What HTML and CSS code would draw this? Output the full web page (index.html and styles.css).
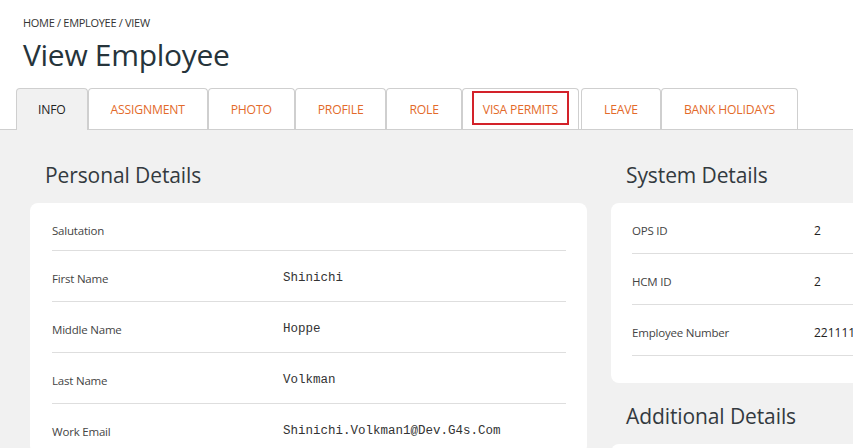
FILE: index.html
```html
<!DOCTYPE html>
<html lang="en">
<head>
<meta charset="utf-8">
<title>View Employee</title>
<link rel="stylesheet" href="styles.css">
</head>
<body>
<header class="page-header">
  <div class="breadcrumb">HOME / EMPLOYEE / VIEW</div>
  <h1 class="title">View Employee</h1>
</header>
<nav class="tabs">
  <a class="tab active">INFO</a>
  <a class="tab">ASSIGNMENT</a>
  <a class="tab">PHOTO</a>
  <a class="tab">PROFILE</a>
  <a class="tab">ROLE</a>
  <a class="tab highlighted">VISA PERMITS<span class="highlight-box"></span></a>
  <a class="tab">LEAVE</a>
  <a class="tab">BANK HOLIDAYS</a>
</nav>
<main class="content">
  <section class="col col-left">
    <h2 class="section-title">Personal Details</h2>
    <div class="card">
      <div class="row personal"><div class="label">Salutation</div><div class="value mono"></div></div>
      <div class="row personal"><div class="label">First Name</div><div class="value mono">Shinichi</div></div>
      <div class="row personal"><div class="label">Middle Name</div><div class="value mono">Hoppe</div></div>
      <div class="row personal"><div class="label">Last Name</div><div class="value mono">Volkman</div></div>
      <div class="row personal"><div class="label">Work Email</div><div class="value mono">Shinichi.Volkman1@Dev.G4s.Com</div></div>
    </div>
  </section>
  <section class="col col-right">
    <h2 class="section-title">System Details</h2>
    <div class="card system-card">
      <div class="row system"><div class="label">OPS ID</div><div class="value">2</div></div>
      <div class="row system"><div class="label">HCM ID</div><div class="value">2</div></div>
      <div class="row system"><div class="label">Employee Number</div><div class="value">22111111</div></div>
    </div>
    <h2 class="section-title additional">Additional Details</h2>
    <div class="card additional-card"></div>
  </section>
</main>
</body>
</html>
```
FILE: styles.css
```css
html, body {
  margin: 0;
  padding: 0;
  overflow: hidden;
  background: #ffffff;
  font-family: "Open Sans", "Noto Sans", sans-serif;
}

.page-header {
  padding: 16px 23px 0;
}

.breadcrumb {
  font-size: 11px;
  line-height: 14px;
  color: #333;
  letter-spacing: -0.3px;
}

.title {
  margin: 5px 0 0;
  font-size: 30px;
  line-height: 40px;
  font-weight: 400;
  color: #26343b;
  letter-spacing: -0.3px;
}

.tabs {
  display: flex;
  margin-top: 13px;
  padding-left: 16px;
  border-bottom: 1px solid #cfcfcf;
  height: 41px;
}

.tab {
  position: relative;
  display: flex;
  align-items: center;
  padding: 0 22px;
  height: 40px;
  border: 1px solid #cfcfcf;
  border-bottom: none;
  border-radius: 4px 4px 0 0;
  background: #fff;
  color: #e36a2a;
  font-size: 12.2px;
  letter-spacing: -0.2px;
}

.tab.active {
  background: #f1f1f1;
  color: #222;
  height: 41px;
  margin-bottom: -1px;
  padding: 0 21px;
}

.tab.highlighted {
  padding: 0 20px;
  margin-right: 2px;
}

.highlight-box {
  position: absolute;
  left: 9px;
  right: 9px;
  top: 2px;
  bottom: 4px;
  border: 2px solid #d3222a;
}

.content {
  display: flex;
  gap: 24px;
  background: #f1f1f1;
  padding: 30px 0 0 30px;
  min-height: 400px;
}

.col-left {
  width: 557px;
  flex: none;
}

.col-right {
  width: 400px;
  flex: none;
}

.section-title {
  margin: 0 0 13px 15px;
  font-size: 21px;
  line-height: 30px;
  font-weight: 400;
  color: #333a3f;
  letter-spacing: -0.1px;
}

.section-title.additional {
  margin-top: 18px;
}

.card {
  background: #fff;
  border-radius: 8px;
  padding: 0 21px 0 22px;
}

.system-card {
  padding: 0 0 27px 21px;
}

.additional-card {
  height: 60px;
}

.row {
  display: flex;
  align-items: flex-start;
  border-bottom: 1px solid #dedede;
}

.row.personal {
  padding: 20px 0 12px;
}

.row.personal:last-child {
  border-bottom: none;
}

.row.system {
  padding: 20px 0 15px;
}

.label {
  font-size: 11.5px;
  line-height: 15px;
  color: #444;
  letter-spacing: -0.2px;
}

.personal .label {
  width: 231px;
  flex: none;
}

.system .label {
  width: 182px;
  flex: none;
}

.value {
  font-size: 12px;
  line-height: 15px;
  color: #222;
}

.value.mono {
  font-family: "Liberation Mono", "DejaVu Sans Mono", monospace;
  font-size: 12.5px;
  line-height: 21px;
  margin-top: -3px;
  color: #333;
}
```
